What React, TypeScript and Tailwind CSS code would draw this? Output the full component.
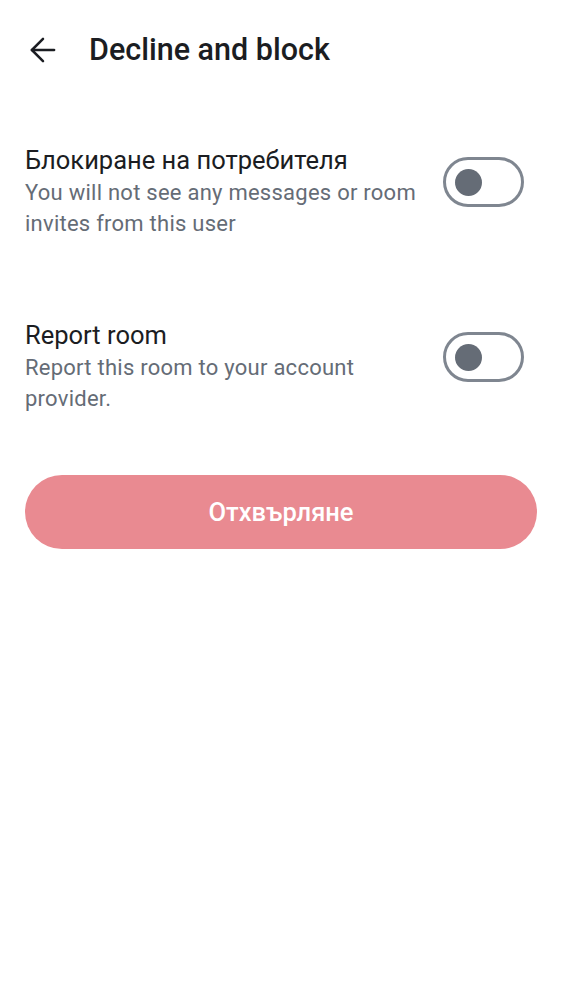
import { ArrowLeft } from "lucide-react"

function Toggle() {
  return (
    <div className="mt-[12px] mr-[13px] ml-6 flex h-[50px] w-[81px] shrink-0 items-center rounded-full border-[3px] border-[#7f8690] bg-white pl-[9px]">
      <div className="h-[27px] w-[27px] rounded-full bg-[#656c76]" />
    </div>
  )
}

function Row({ title, subtitle }: { title: string; subtitle: string }) {
  return (
    <div className="flex items-start">
      <div className="flex-1">
        <div className="text-[25.5px] leading-[30px] text-[#1b1d22]">{title}</div>
        <div className="mt-[2px] text-[22px] leading-[31px] tracking-[0.25px] text-[#656c76]">{subtitle}</div>
      </div>
      <Toggle />
    </div>
  )
}

export default function App() {
  return (
    <div className="min-h-[1000px] w-full bg-white font-['Roboto',sans-serif]">
      <div className="flex h-[100px] items-center pl-[24px] pr-[30px]">
        <ArrowLeft className="h-[38px] w-[38px] text-[#1b1d22]" strokeWidth={1.6} />
        <h1 className="ml-[27px] text-[30.5px] font-medium text-[#1b1d22]">Decline and block</h1>
      </div>
      <div className="px-[25px] pt-[45px]">
        <Row
          title="Блокиране на потребителя"
          subtitle="You will not see any messages or room invites from this user"
        />
        <div className="h-[81px]" />
        <Row title="Report room" subtitle="Report this room to your account provider." />
        <button className="mt-[61px] flex h-[74px] w-full items-center justify-center rounded-full bg-[#e98a91] text-[25.5px] font-medium text-white">
          Отхвърляне
        </button>
      </div>
    </div>
  )
}
